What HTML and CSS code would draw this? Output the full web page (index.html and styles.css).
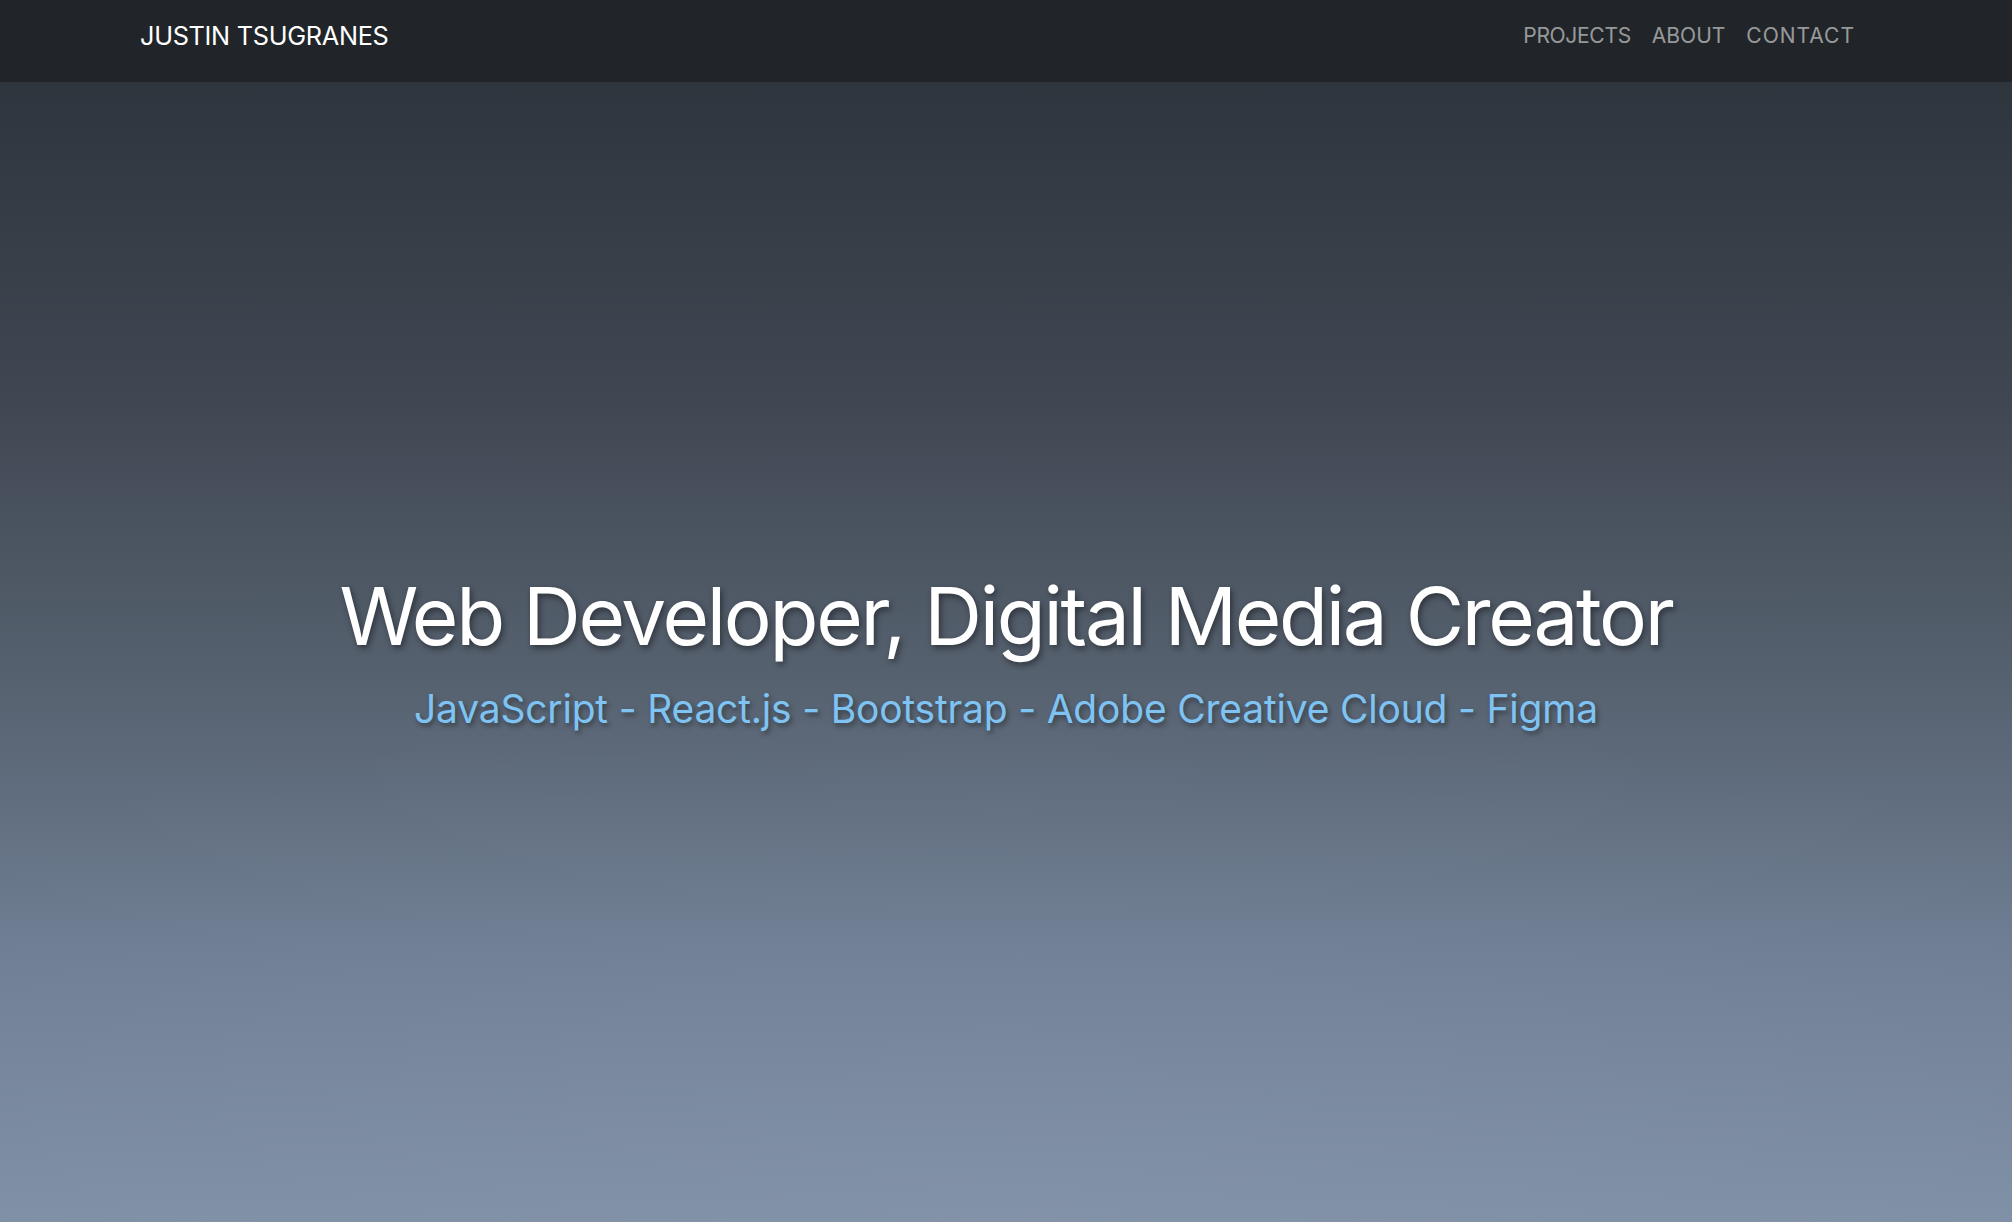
FILE: index.html
```html
<!DOCTYPE html>
<html lang="en">
<head>
<meta charset="utf-8">
<title>Justin Tsugranes</title>
<link rel="stylesheet" href="styles.css">
</head>
<body>
<nav class="navbar">
  <div class="nav-inner">
    <a class="brand" href="#">JUSTIN TSUGRANES</a>
    <ul class="nav-links">
      <li><a href="#" class="tight">PROJECTS</a></li>
      <li><a href="#">ABOUT</a></li>
      <li><a href="#" class="wide">CONTACT</a></li>
    </ul>
  </div>
</nav>
<header class="hero">
  <div class="hero-text">
    <h1 class="title">Web Developer, Digital Media Creator</h1>
    <p class="subtitle">JavaScript - React.js - Bootstrap - Adobe Creative Cloud - Figma</p>
  </div>
</header>
</body>
</html>
```
FILE: styles.css
```css
* { box-sizing: border-box; }
html, body { margin: 0; padding: 0; }
body {
  font-family: Inter, "Noto Sans", "Liberation Sans", sans-serif;
  background: #212529;
  height: 1222px;
  overflow: hidden;
  display: flex;
  flex-direction: column;
}
.navbar {
  background: #212529;
  height: 82px;
  flex: 0 0 82px;
  display: flex;
  align-items: center;
  padding-bottom: 12px;
}
.nav-inner {
  width: 100%;
  padding: 0 157px 0 140px;
  display: flex;
  justify-content: space-between;
  align-items: center;
}
.brand {
  color: #fff;
  text-decoration: none;
  font-size: 25.3px;
  letter-spacing: -0.3px;
}
.nav-links {
  list-style: none;
  margin: 0;
  padding: 0;
  display: flex;
  gap: 21px;
}
.nav-links a {
  color: rgba(255,255,255,0.55);
  text-decoration: none;
  font-size: 21px;
}
.nav-links a.tight { letter-spacing: -0.3px; }
.nav-links a.wide { letter-spacing: 1px; }
.hero {
  flex: 1;
  background:
    radial-gradient(ellipse 80% 45% at 50% 100%, rgba(140,155,178,0.28), rgba(140,155,178,0) 100%),
    linear-gradient(to bottom, #2f353d 0%, #3f4752 28%, #56616f 52%, #6e7d92 76%, #7f8fa4 100%);
  display: flex;
  align-items: center;
  justify-content: center;
}
.hero-text {
  text-align: center;
  margin-top: -3px;
}
.title {
  margin: 0;
  color: #fff;
  font-weight: 400;
  font-size: 80px;
  letter-spacing: -2.3px;
  line-height: 1.2;
  text-shadow: 2px 3px 6px rgba(0,0,0,0.45);
}
.subtitle {
  margin: 22px 0 0;
  color: #7fc3f2;
  font-size: 39px;
  letter-spacing: -0.2px;
  line-height: 1.2;
  text-shadow: 2px 3px 5px rgba(0,0,0,0.4);
}
```
